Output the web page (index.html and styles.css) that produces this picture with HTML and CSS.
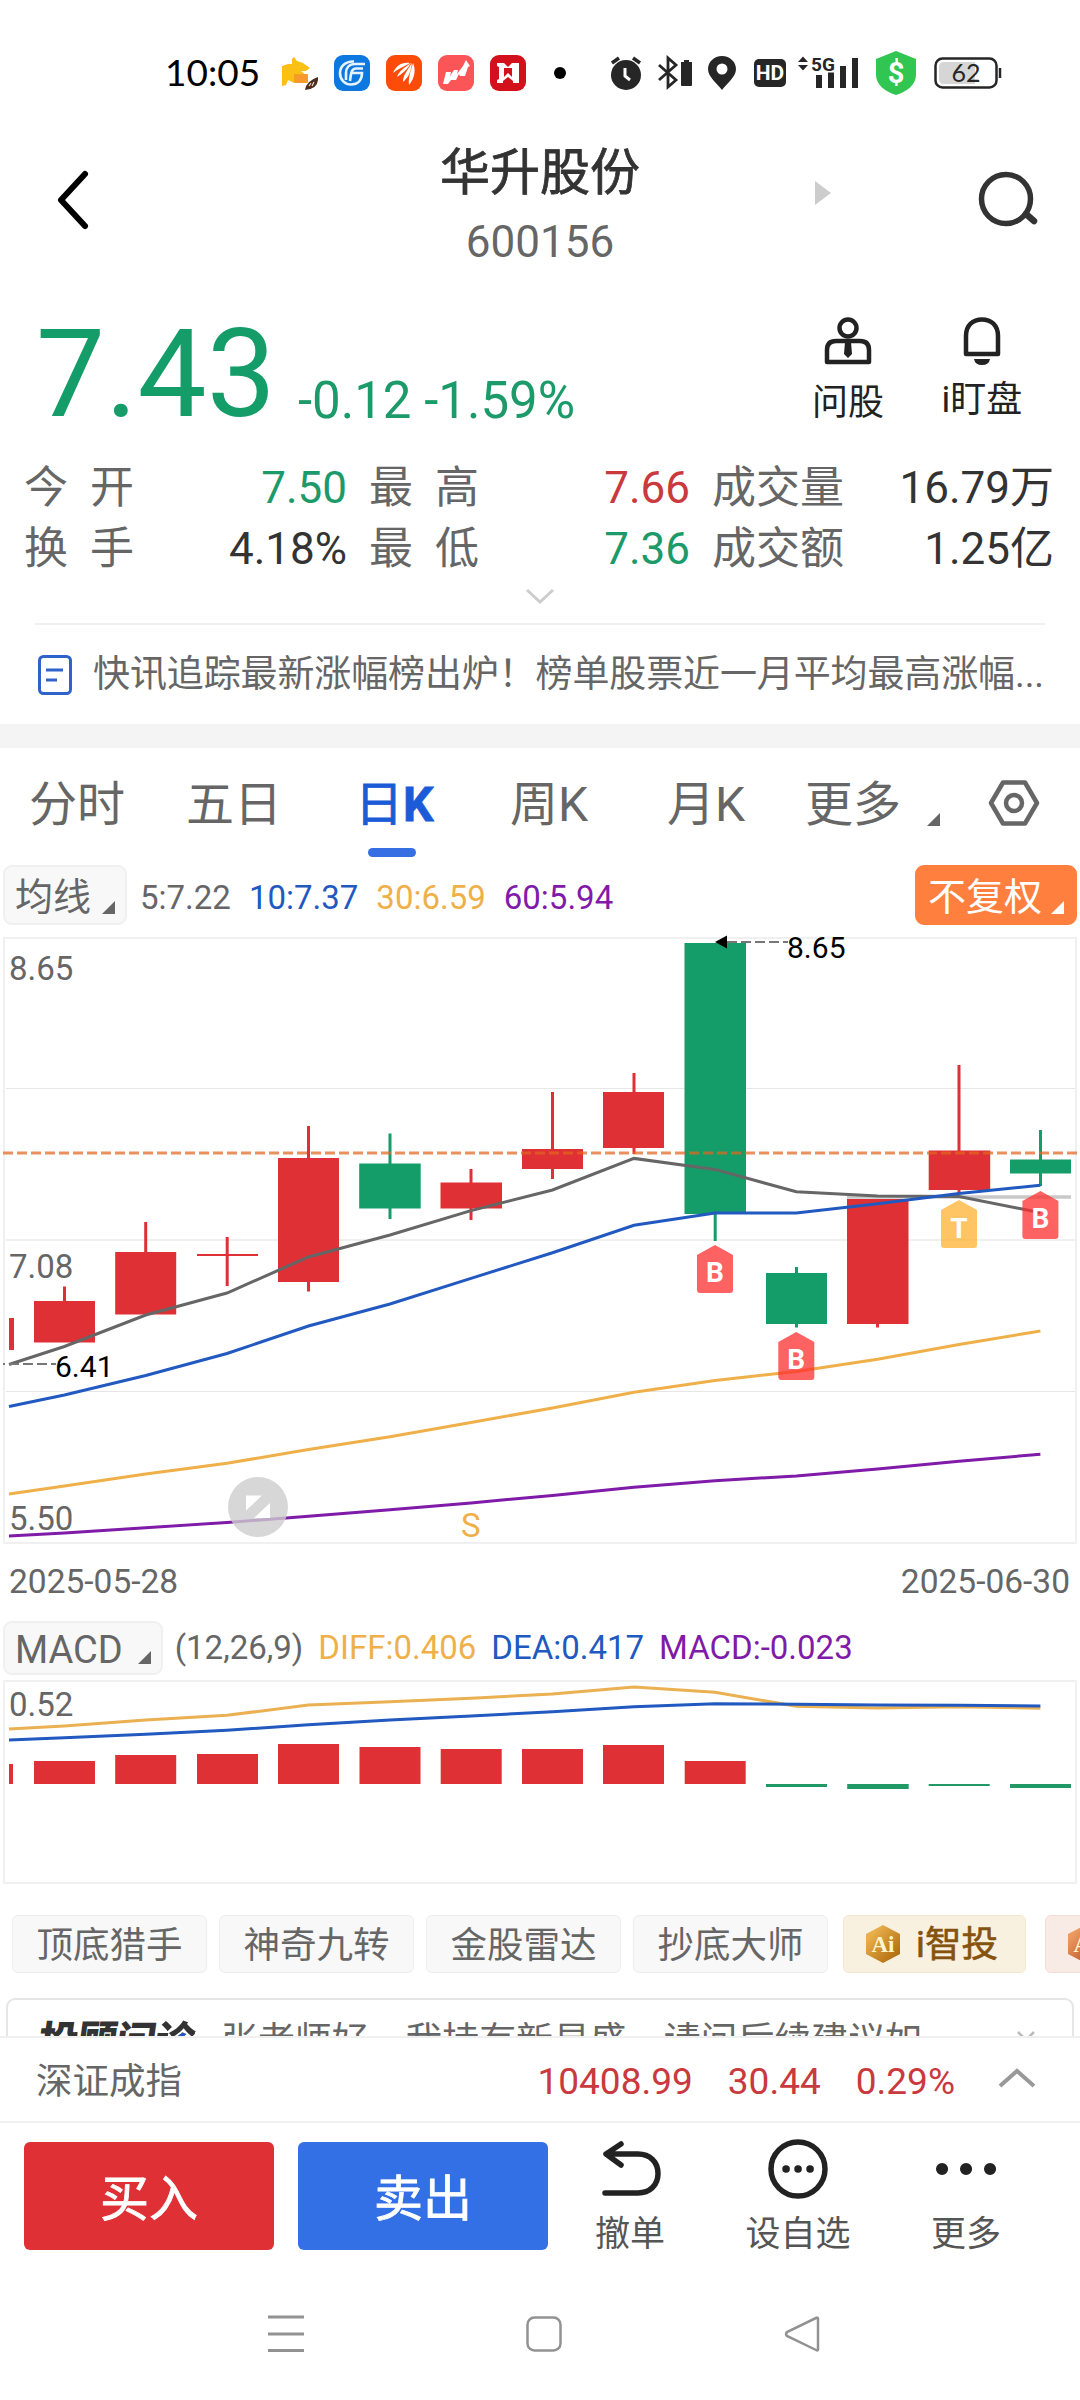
FILE: index.html
```html
<!DOCTYPE html>
<html lang="zh-CN">
<head>
    <meta charset="UTF-8">
    <meta name="viewport" content="width=device-width, initial-scale=1.0">
    <title>华升股份 600156</title>
    <link rel="stylesheet" href="styles.css">
</head>
<body>
    <div class="phone">
        <div class="status-bar">
            <span class="clock">10:05</span>
            <div class="app-icons">
                <svg width="36" height="36" viewBox="0 0 36 36">
                    <path d="M0 11 L6 9 L10 9 L10 4 L12 2 L15 6 L21 8 L28 13 L24 16 L19 16 L24 20 L12 22 L12 28 L6 25 L4 30 L0 31 Z" fill="#fbc016"/>
                    <rect x="12" y="19" width="14" height="9" rx="1" fill="#f79a2b"/>
                    <path d="M23 35 Q24 26 36 22 Q37 34 23 35Z" fill="#4a2c22"/>
                    <path d="M27 31 l2 -3 M30 31 l2 -4" stroke="#e8d8c8" stroke-width="1.2"/>
                </svg>
                <svg width="36" height="36" viewBox="0 0 36 36">
                    <rect width="36" height="36" rx="9" fill="#0c78e0"/>
                    <g fill="none" stroke="#e6f3ff" stroke-width="2.6">
                        <path d="M20 6.500 C11 6 6 12 6 18 C6 25 11 29.500 17 29.500 C24 29.500 28 25 28 18 H18"/>
                        <path d="M31 9 H21 C15 9 12 13 12 18 V25"/>
                        <path d="M29 13.500 H22 C18 13.500 17 17 16 26"/>
                    </g>
                </svg>
                <svg width="36" height="36" viewBox="0 0 36 36">
                    <rect width="36" height="36" rx="9" fill="#fc4c08"/>
                    <path d="M24 8 C15 7 10 11 7 18 C12 14 17 12 24 8Z M25 8 C18 13 13 16 11 22 C16 19 21 15 25 8Z M26 8 C21 16 17 20 17 27 C23 22 25 16 26 8Z M27 8 C25 16 22 22 23 30 C29 23 30 14 27 8Z" fill="#fff"/>
                </svg>
                <svg width="36" height="36" viewBox="0 0 36 36">
                    <rect width="36" height="36" rx="9" fill="#fb5558"/>
                    <path d="M5 29 L8 17 L13 17 L12 21 L16 15 L20 15 L19 19 L25 11 L28 5 L32 11 L30 12 L27 21 L22 21 L21 19 L18 25 L13 25 L10 29 Z" fill="#fff"/>
                </svg>
                <svg width="36" height="36" viewBox="0 0 36 36">
                    <rect width="36" height="36" rx="9" fill="#d3111d"/>
                    <path d="M7 8 H14 L18 12 L22 8 H29 V28 H23 V26 L18 22 L13 26 V28 H7 V25 L9 24 V12 L7 11 Z" fill="#fff"/>
                    <path d="M14 13 H22 V22 L18 18 L14 22 Z" fill="#d3111d"/>
                </svg>
            </div>
            <span class="more-dot"></span>
            <div class="sys-icons">
                <svg width="32" height="36" viewBox="0 0 32 36">
                    <circle cx="16" cy="20" r="15" fill="#262626"/>
                    <path d="M2 8 L9 3 M30 8 L23 3" stroke="#262626" stroke-width="3.500"/>
                    <path d="M15 13 V21 L20 25" fill="none" stroke="#fff" stroke-width="3"/>
                </svg>
                <svg width="36" height="36" viewBox="0 0 36 36">
                    <path d="M2 10 L19 25 L11 32 V3 L19 10 L2 25" fill="none" stroke="#262626" stroke-width="2.800"/>
                    <path d="M24 7 H27 V5 H32 V7 H35 V30 Q35 31 34 31 H25 Q24 31 24 30 Z" fill="#262626"/>
                </svg>
                <svg width="28" height="36" viewBox="0 0 28 36">
                    <path d="M14 1 C6 1 0 7 0 14 C0 22 9 28 14 35 C19 28 28 22 28 14 C28 7 22 1 14 1Z" fill="#262626"/>
                    <circle cx="14" cy="14" r="5.500" fill="#fff"/>
                </svg>
                <span class="hd">HD</span>
                <svg class="signal" width="62" height="36" viewBox="0 0 62 36">
                    <path d="M0 7 L5 1.500 L10 7 Z M0 10 L5 15.500 L10 10 Z" fill="#262626"/>
                    <text x="13" y="15.500" class="net">5G</text>
                    <path d="M18 20 h6 v13 h-6z M30 17.500 h6 v15.500 h-6z M42 11 h6 v22 h-6z M54 3 h6 v30 h-6z" fill="#262626"/>
                </svg>
                <svg width="42" height="46" viewBox="0 0 42 46">
                    <path d="M21 1 L41 9 V25 C41 35 31 42 21 45 C11 42 1 35 1 25 V9 Z" fill="#31c551"/>
                    <text x="21" y="33" class="dollar">$</text>
                </svg>
                <svg width="68" height="34" viewBox="0 0 68 34">
                    <rect x="1.500" y="2.500" width="61" height="29" rx="7" fill="#fff" stroke="#262626" stroke-width="2.500"/>
                    <path d="M10 6 H41 V28 H10 Q5 28 5 23 V11 Q5 6 10 6Z" fill="#d6d6d6"/>
                    <path d="M66 12 V22" stroke="#262626" stroke-width="2.500"/>
                    <text x="32" y="26" class="battery">62</text>
                </svg>
            </div>
        </div>

        <div class="header">
            <svg class="back" width="36" height="64" viewBox="0 0 36 64">
                <path d="M30 6 L6 32 L30 58" fill="none" stroke="#000" stroke-width="6" stroke-linecap="round" stroke-linejoin="round"/>
            </svg>
            <div class="stock">
                <div class="stock-name">华升股份</div>
                <div class="stock-code">600156</div>
            </div>
            <div class="header-right">
                <svg class="next" width="16" height="24" viewBox="0 0 16 24"><path d="M0 0 L16 12 L0 24Z" fill="#ccc"/></svg>
                <svg width="64" height="60" viewBox="0 0 64 60">
                    <circle cx="29" cy="29" r="24.500" fill="none" stroke="#333" stroke-width="5.500"/>
                    <path d="M49 44 L57 51" stroke="#333" stroke-width="6.500" stroke-linecap="round"/>
                </svg>
            </div>
        </div>

        <div class="quote">
            <div class="price">7.43</div>
            <div class="change">-0.12 -1.59%</div>
            <div class="quick">
                <svg width="48" height="50" viewBox="0 0 48 50">
                    <g fill="none" stroke="#222" stroke-width="4.500">
                        <circle cx="24" cy="12" r="8.500"/>
                        <path d="M12 25 H36 Q45 25 45 34 V46 H3 V34 Q3 25 12 25Z" stroke-linejoin="round"/>
                    </g>
                    <path d="M21 26 H27 L28 38 L24 42 L20 38Z" fill="#222"/>
                </svg>
                <span>问股</span>
            </div>
            <div class="quick watch">
                <svg width="48" height="50" viewBox="0 0 48 50">
                    <path d="M8 38 V20 C8 9 15 3.500 24 3.500 C33 3.500 40 9 40 20 V38 Z" fill="none" stroke="#222" stroke-width="4.500" stroke-linejoin="round"/>
                    <path d="M16 43 H32 Q31 49 24 49 Q17 49 16 43Z" fill="#222"/>
                </svg>
                <span>i盯盘</span>
            </div>
        </div>

        <div class="stats">
            <span class="stat-label wide"><i>今</i><i>开</i></span><span class="stat-value down">7.50</span>
            <span class="stat-label wide"><i>最</i><i>高</i></span><span class="stat-value up">7.66</span>
            <span class="stat-label">成交量</span><span class="stat-value">16.79万</span>
            <span class="stat-label wide"><i>换</i><i>手</i></span><span class="stat-value">4.18%</span>
            <span class="stat-label wide"><i>最</i><i>低</i></span><span class="stat-value down">7.36</span>
            <span class="stat-label">成交额</span><span class="stat-value">1.25亿</span>
        </div>
        <div class="expand">
            <svg width="30" height="18" viewBox="0 0 30 18"><path d="M2 2 L15 14 L28 2" fill="none" stroke="#ccc" stroke-width="3"/></svg>
        </div>

        <div class="news">
            <svg width="34" height="40" viewBox="0 0 34 40">
                <rect x="1.500" y="1.500" width="31" height="37" rx="4" fill="none" stroke="#2f63c9" stroke-width="3"/>
                <path d="M8 15 H25 M8 25 H19" stroke="#2f63c9" stroke-width="3"/>
            </svg>
            <span>快讯追踪最新涨幅榜出炉！榜单股票近一月平均最高涨幅...</span>
        </div>

        <div class="tabs">
            <span class="tab">分时</span>
            <span class="tab">五日</span>
            <span class="tab active">日<b>K</b></span>
            <span class="tab">周K</span>
            <span class="tab">月K</span>
            <span class="tab more">更多</span>
            <svg class="tri" width="13" height="13" viewBox="0 0 13 13"><path d="M13 0 V13 H0Z" fill="#666"/></svg>
            <svg class="settings" width="52" height="50" viewBox="0 0 52 50">
                <path d="M15 4.500 H37 L49 25 L37 45.500 H15 L3 25 Z" fill="none" stroke="#666" stroke-width="4.500" stroke-linejoin="round"/>
                <circle cx="26" cy="25" r="8" fill="none" stroke="#666" stroke-width="4.500"/>
            </svg>
        </div>

        <div class="indicator-row">
            <div class="select">均线<svg width="13" height="13" viewBox="0 0 13 13"><path d="M13 0 V13 H0Z" fill="#666"/></svg></div>
            <span class="ma5">5:7.22</span>
            <span class="blue">10:7.37</span>
            <span class="yellow">30:6.59</span>
            <span class="purple">60:5.94</span>
            <div class="select adjust">不复权<svg width="13" height="13" viewBox="0 0 13 13"><path d="M13 0 V13 H0Z" fill="#fff"/></svg></div>
        </div>

        <svg class="chart" width="1080" height="614" viewBox="0 932 1080 614">
            <rect x="4" y="938" width="1072" height="605" fill="none" stroke="#f0f0f0" stroke-width="2"/>
            <path d="M6 1088.500 H1075 M6 1391.500 H1075" stroke="#e6e6e6"/>
            <path d="M6 1240 H1075" stroke="#f0f0f0" stroke-width="2"/>

            <!-- candles -->
            <g fill="#df3135">
                <path d="M9 1318h5v32h-5z"/>
                <path d="M34 1301h61v41.500h-61z M63 1286.500h3v15h-3z"/>
                <path d="M115.200 1252h61v62.500h-61z M144.200 1222h3v31h-3z"/>
                <path d="M197 1254h61v2h-61z M225.700 1237h3v49h-3z"/>
                <path d="M278 1158h61v124h-61z M307 1126h3v165.500h-3z"/>
                <path d="M440.500 1182.500h61.500v26h-61.500z M469.500 1169h3v51h-3z"/>
                <path d="M522 1149h61v20h-61z M551 1092h3v87h-3z"/>
                <path d="M603 1092h61v56h-61z M632.500 1073h3v81h-3z"/>
                <path d="M847 1199h61.500v125h-61.500z M876 1320h3v7.500h-3z"/>
                <path d="M928.700 1150.500h61.500v39.500h-61.500z M957.500 1065h3v128h-3z"/>
            </g>
            <g fill="#149d69">
                <path d="M359.200 1163.500h61.500v45h-61.500z M388.500 1133.500h3v85.500h-3z"/>
                <path d="M684.500 943h61.500v271h-61.500z M713.700 1210h3v31h-3z"/>
                <path d="M766 1273h61v51h-61z M795 1267h3v60.500h-3z"/>
                <path d="M1010 1159.500h61v14h-61z M1039 1130h3v56h-3z"/>
            </g>
            <path d="M847 1197 H1071" stroke="#c8c8c8" stroke-width="3.500"/>
            <path d="M3 1153 H1077" stroke="#e2651f" stroke-opacity="0.720" stroke-width="3.200" stroke-dasharray="10 4"/>

            <!-- moving averages -->
            <g fill="none" stroke-width="3">
                <polyline stroke="#666" points="9,1364.500 64.400,1346.500 145.700,1315 227,1293 308.500,1257 390,1235 471,1210.600 552.500,1190 634,1158.400 715,1169.400 796.300,1191.800 877.600,1196 959,1196.500 1040.400,1212.700"/>
                <polyline stroke="#2159c0" points="9,1406.500 64.400,1395 145.700,1375.500 227,1353.500 308.500,1326 390,1304 471,1278.400 552.500,1252.700 634,1225.300 715,1213 796.300,1213 877.600,1203.700 959,1193.500 1040.400,1185.300"/>
                <polyline stroke="#efb04a" points="9,1493.900 64.400,1486 145.700,1474 227,1463.300 308.500,1449.400 390,1436.700 471,1422.400 552.500,1408 634,1392.200 715,1380.400 796.300,1371.400 877.600,1359.200 959,1344.500 1040.400,1331"/>
                <polyline stroke="#7f1ba8" points="9,1536 64.400,1533 145.700,1527.800 227,1522.400 308.500,1516.300 390,1509.800 471,1502.900 552.500,1495.500 634,1487.300 715,1480.800 796.300,1475.900 877.600,1469 959,1461.200 1040.400,1454.300"/>
            </g>

            <g class="axis">
                <text x="9" y="980">8.65</text>
                <text x="9" y="1278">7.08</text>
                <text x="9" y="1529.500">5.50</text>
            </g>
            <path d="M3 1364 H56" stroke="#777" stroke-width="1.800" stroke-dasharray="10 4" stroke-dashoffset="8"/>
            <path d="M727 942 H788" stroke="#777" stroke-width="1.800" stroke-dasharray="10 4"/>
            <path d="M715 942 L727 935.500 V948.500 Z"/>
            <g class="extreme">
                <text x="55" y="1377">6.41</text>
                <text x="787" y="957.500">8.65</text>
            </g>
            <text x="461" y="1536.500" class="sell-mark">S</text>

            <!-- trade marks -->
            <g class="marks">
                <path class="mark-b" d="M715 1245 L733 1255 V1290 Q733 1293 730 1293 H700 Q697 1293 697 1290 V1255Z"/>
                <path class="mark-b" d="M796.300 1332 L814.300 1342 V1377 Q814.300 1380 811.300 1380 H781.300 Q778.300 1380 778.300 1377 V1342Z"/>
                <path class="mark-t" d="M959 1200 L977 1210 V1245 Q977 1248 974 1248 H944 Q941 1248 941 1245 V1210Z"/>
                <path class="mark-b" d="M1040.400 1191 L1058.400 1201 V1236 Q1058.400 1239 1055.400 1239 H1025.400 Q1022.400 1239 1022.400 1236 V1201Z"/>
                <text x="715" y="1282">B</text>
                <text x="796.300" y="1369">B</text>
                <text x="959" y="1237.500">T</text>
                <text x="1040.400" y="1228">B</text>
            </g>

            <circle cx="258" cy="1507" r="30" fill="#cdcdcd" fill-opacity="0.800"/>
            <path d="M246 1495.500 h16 l-16 15z M270 1518 h-16 l16 -15z" fill="#fff"/>
        </svg>

        <div class="dates">
            <span>2025-05-28</span>
            <span>2025-06-30</span>
        </div>

        <div class="indicator-row macd-row">
            <div class="select macd">MACD<svg width="13" height="13" viewBox="0 0 13 13"><path d="M13 0 V13 H0Z" fill="#666"/></svg></div>
            <span>(12,26,9)</span>
            <span class="yellow">DIFF:0.406</span>
            <span class="blue">DEA:0.417</span>
            <span class="purple">MACD:-0.023</span>
        </div>

        <svg class="chart" width="1080" height="206" viewBox="0 1679 1080 206">
            <rect x="4" y="1681" width="1072" height="202" fill="none" stroke="#f0f0f0" stroke-width="2"/>
            <path fill="#df3135" d="M9 1764h4v20h-4z M34 1761h61v23h-61z M115.200 1755h61v29h-61z M197 1754h61v30h-61z M278 1744h61v40h-61z M359.500 1747h61v37h-61z M440.700 1749h61v35h-61z M522 1749h61v35h-61z M603 1745h61v39h-61z M684.700 1761h61v23h-61z"/>
            <path fill="#219966" d="M766 1784h61v3h-61z M847.200 1784h61.500v5h-61.500z M928.700 1784h61v2h-61z M1010 1784h61v4h-61z"/>
            <g fill="none" stroke-width="3">
                <polyline stroke="#eab052" points="9,1729 64.400,1726 145.700,1720 227,1715.300 308.500,1705 390,1701.700 471,1698.300 552.500,1694 634,1687 715,1692.300 796.300,1706.300 877.600,1708 959,1706.700 1040.400,1708.300"/>
                <polyline stroke="#2159c0" points="9,1740 64.400,1737.700 145.700,1734.300 227,1730.300 308.500,1724.700 390,1720 471,1716 552.500,1711.700 634,1706.700 715,1703.700 796.300,1704.300 877.600,1705 959,1705.300 1040.400,1706"/>
            </g>
            <g class="axis"><text x="9" y="1715.500">0.52</text></g>
        </svg>

        <div class="tools">
            <span class="tool">顶底猎手</span>
            <span class="tool">神奇九转</span>
            <span class="tool">金股雷达</span>
            <span class="tool">抄底大师</span>
            <span class="tool ai">
                <svg width="38" height="40" viewBox="0 0 38 40">
                    <defs>
                        <linearGradient id="gold" x1="0" y1="0" x2="1" y2="1"><stop offset="0.200" stop-color="#e8b04c"/><stop offset="0.900" stop-color="#b06a0c"/></linearGradient>
                        <linearGradient id="copper" x1="0" y1="0" x2="1" y2="1"><stop offset="0.200" stop-color="#eb9a60"/><stop offset="0.900" stop-color="#b4481c"/></linearGradient>
                    </defs>
                    <path d="M19 1 L36 10 V30 L19 39 L2 30 V10Z" fill="url(#gold)"/>
                    <text x="19" y="28" class="ai-text">Ai</text>
                </svg>i智投</span>
            <span class="tool ai ai-red">
                <svg width="38" height="40" viewBox="0 0 38 40">
                    <path d="M19 1 L36 10 V30 L19 39 L2 30 V10Z" fill="url(#copper)"/>
                    <text x="19" y="28" class="ai-text">Ai</text>
                </svg></span>
        </div>

        <div class="advisor-clip">
            <div class="advisor">
                <span class="advisor-logo">投顾问<em>诊</em></span>
                <span class="advisor-text">张老师好，我持有新易盛，请问后续建议如</span>
                <svg width="18" height="18" viewBox="0 0 18 18"><path d="M1 1 L17 17 M17 1 L1 17" stroke="#bbb" stroke-width="2.500"/></svg>
            </div>
        </div>

        <div class="index-bar">
            <span class="index-name">深证成指</span>
            <span class="up">10408.99</span>
            <span class="up">30.44</span>
            <span class="up">0.29%</span>
            <svg width="38" height="22" viewBox="0 0 38 22"><path d="M2 19 L19 4 L36 19" fill="none" stroke="#999" stroke-width="4"/></svg>
        </div>

        <div class="trade-bar">
            <div class="trade-btn buy">买入</div>
            <div class="trade-btn sell">卖出</div>
            <div class="action">
                <svg width="64" height="64" viewBox="0 0 64 64">
                    <path d="M23 7 L8 17 L23 28 M8 17 H40 C52 17 60 25 60 36.500 C60 48 52 56 40 56 H7" fill="none" stroke="#222" stroke-width="5.500" stroke-linecap="round" stroke-linejoin="round"/>
                </svg>
                <span>撤单</span>
            </div>
            <div class="action wide">
                <svg width="64" height="64" viewBox="0 0 64 64">
                    <circle cx="32" cy="32" r="27" fill="none" stroke="#222" stroke-width="5.500"/>
                    <path d="M20 32 h.1 M32 32 h.1 M44 32 h.1" stroke="#222" stroke-width="7.500" stroke-linecap="round"/>
                </svg>
                <span>设自选</span>
            </div>
            <div class="action">
                <svg width="64" height="64" viewBox="0 0 64 64">
                    <path d="M8 32 h.1 M32 32 h.1 M56 32 h.1" stroke="#222" stroke-width="12" stroke-linecap="round"/>
                </svg>
                <span>更多</span>
            </div>
        </div>

        <div class="nav-bar">
            <svg width="40" height="40" viewBox="0 0 40 40"><path d="M2 3 H38 M2 20 H38 M2 36.500 H38" stroke="#929292" stroke-width="3"/></svg>
            <svg width="40" height="40" viewBox="0 0 40 40"><rect x="3.500" y="3.500" width="33" height="33" rx="7" fill="none" stroke="#929292" stroke-width="2.500"/></svg>
            <svg width="40" height="40" viewBox="0 0 40 40"><path d="M36 4.500 V35.500 Q36 37 34 36 L5 22 Q3 20 5 18 L34 4 Q36 3 36 4.500Z" fill="none" stroke="#929292" stroke-width="2.500"/></svg>
        </div>
    </div>
</body>
</html>
```
FILE: styles.css
```css
* {
    margin: 0;
    padding: 0;
    box-sizing: border-box;
}

body {
    font-family: Roboto, "Noto Sans CJK SC", sans-serif;
    background: #fff;
    color: #333;
}

svg {
    display: block;
    flex-shrink: 0;
}

.phone {
    width: 1080px;
    height: 2400px;
    overflow: hidden;
    display: flex;
    flex-direction: column;
    white-space: nowrap;
}

.phone > * {
    flex-shrink: 0;
}

.up {
    color: #c9393d;
}

.down {
    color: #1c9a69;
}

.blue {
    color: #2159c0;
}

.yellow {
    color: #efb04a;
}

.purple {
    color: #7f1ba8;
}

/* status bar */
.status-bar {
    height: 120px;
    padding: 26px 0 0 165px;
    display: flex;
    align-items: center;
}

.clock {
    width: 117px;
    margin-top: -4px;
    font-family: Lato, sans-serif;
    font-size: 37px;
    color: #000;
}

.app-icons {
    display: flex;
    gap: 16px;
}

.more-dot {
    width: 12px;
    height: 12px;
    margin: 0 44px 0 28px;
    border-radius: 50%;
    background: #000;
}

.sys-icons {
    display: flex;
    align-items: center;
}

.sys-icons svg:nth-child(2) {
    margin: 0 15px;
}

.hd {
    width: 32px;
    height: 28px;
    margin: 0 12px 0 18px;
    border-radius: 5px;
    background: #262626;
    color: #fff;
    font-size: 21px;
    font-weight: bold;
    line-height: 28px;
    text-align: center;
}

.signal {
    margin-right: 15px;
}

.net {
    font-size: 19px;
    font-weight: bold;
    fill: #262626;
}

.dollar {
    font-size: 29px;
    font-weight: bold;
    fill: #fff;
    text-anchor: middle;
}

.sys-icons svg:last-child {
    margin-left: 17px;
}

.battery {
    font-family: Lato, sans-serif;
    font-size: 25px;
    fill: #262626;
    text-anchor: middle;
}

/* header */
.header {
    height: 160px;
    padding: 0 39px;
    display: grid;
    grid-template-columns: 1fr auto 1fr;
    align-items: center;
}

.back {
    margin-left: 16px;
}

.stock {
    text-align: center;
}

.stock-name {
    height: 60px;
    margin-top: 11px;
    font-size: 50px;
    line-height: 60px;
    -webkit-text-stroke: 0.8px #333;
}

.stock-code {
    height: 52px;
    margin-top: 13px;
    font-size: 44px;
    line-height: 52px;
    color: #666;
}

.header-right {
    display: flex;
    justify-content: flex-end;
    align-items: center;
    gap: 146px;
}

.next {
    margin-top: -14px;
}

/* price */
.quote {
    height: 177px;
    padding: 36px 56px 0 36px;
    display: flex;
    color: #222;
}

.price {
    width: 262px;
    margin-top: -14px;
    font-size: 123px;
    line-height: 144px;
    color: #149d69;
}

.change {
    flex: 1;
    margin-top: 55px;
    font-size: 51px;
    line-height: 60px;
    color: #1c9a69;
}

.quick {
    width: 76px;
    height: 110px;
    display: flex;
    flex-direction: column;
    align-items: center;
    font-size: 36px;
    line-height: 40px;
}

.quick span {
    margin-top: 17px;
}

.watch {
    width: 84px;
    margin-left: 54px;
}

.watch span {
    margin-top: 14px;
}

.stats {
    height: 123px;
    padding: 1px 26px 0 24px;
    display: grid;
    grid-template-columns: 110px 213px 132px 211px 157px 1fr;
    grid-template-rows: 61px 61px;
    font-size: 44px;
    line-height: 60px;
}

.stat-label {
    color: #666;
}

.stat-label:nth-child(3),
.stat-label:nth-child(5),
.stat-label:nth-child(9),
.stat-label:nth-child(11) {
    padding-left: 22px;
}

.stat-label.wide {
    display: flex;
    justify-content: space-between;
}

.stat-label i {
    font-style: normal;
}

.stat-value {
    text-align: right;
}

.expand {
    height: 45px;
    margin: 0 35px;
    padding-top: 8px;
    border-bottom: 2px solid #f0f0f0;
    display: flex;
    justify-content: center;
}

.news {
    height: 123px;
    padding: 0 0 0 38px;
    border-bottom: 24px solid #f4f4f4;
    display: flex;
    align-items: center;
    gap: 21px;
    font-size: 37px;
    line-height: 50px;
    letter-spacing: -0.12px;
    color: #666;
}

/* period tabs */
.tabs {
    height: 117px;
    padding: 22px 0 0 29px;
    display: flex;
    font-size: 48px;
    line-height: 70px;
    color: #666;
}

.tab {
    position: relative;
    width: 157px;
}

.tab:nth-child(2) {
    width: 169px;
}

.tab.active {
    width: 155px;
    color: #1c5bd8;
    -webkit-text-stroke: 0.8px #1c5bd8;
}

.tab.active::after {
    content: "";
    position: absolute;
    left: 13px;
    bottom: 8px;
    width: 48px;
    height: 9px;
    border-radius: 5px;
    background: #356fe3;
}

.tab:nth-child(5) {
    width: 138px;
}

.tab.more {
    width: 122px;
}

.tabs .tri {
    margin-top: 43px;
}

.settings {
    margin: 8px 0 0 48px;
}

/* indicator rows */
.indicator-row {
    height: 67px;
    padding: 0 3px;
    display: flex;
    align-items: flex-start;
    font-size: 33px;
    line-height: 66px;
    color: #666;
}

.indicator-row > span {
    margin-right: 18px;
}

.select {
    height: 60px;
    margin-right: 13px;
    padding: 0 10px 0 10px;
    border: 2px solid #f0f0f0;
    border-radius: 9px;
    background: #f8f8f8;
    display: flex;
    gap: 11px;
    font-size: 38px;
    line-height: 61px;
}

.select svg {
    margin-top: 34px;
}

.adjust {
    margin: 0 0 0 auto;
    padding: 0 11px 0 11px;
    gap: 9px;
    border-color: #ff7f3f;
    background: #ff7f3f;
    color: #fff;
}

.chart {
    display: block;
}

.axis {
    font-size: 33px;
    fill: #666;
}

.extreme {
    font-size: 30px;
    fill: #000;
}

.sell-mark {
    font-size: 33px;
    fill: #efb04a;
}

.marks text {
    font-size: 28px;
    font-weight: bold;
    fill: #fff;
    text-anchor: middle;
}

.mark-b {
    fill: #ff2b2b;
    fill-opacity: 0.74;
}

.mark-t {
    fill: #ffb232;
    fill-opacity: 0.75;
}

.dates {
    height: 75px;
    padding: 14px 10px 0 9px;
    display: flex;
    justify-content: space-between;
    font-size: 33.500px;
    line-height: 44px;
    color: #666;
}

.macd-row {
    height: 58px;
    line-height: 53px;
}

.macd-row > span {
    margin-right: 15px;
}

.macd {
    height: 54px;
    margin-right: 12px;
    padding-right: 10px;
    gap: 15px;
    line-height: 54px;
}

.macd svg {
    margin-top: 28px;
}

/* tool pills */
.tools {
    height: 113px;
    padding: 30px 0 0 12px;
    display: flex;
    gap: 12px;
    overflow: hidden;
    font-size: 36.500px;
    line-height: 59px;
    color: #666;
}

.tool {
    flex-shrink: 0;
    width: 195px;
    height: 58px;
    border: 1px solid #eee;
    border-radius: 6px;
    background: #f8f8f8;
    text-align: center;
}

.tool.ai {
    width: 183px;
    margin-left: 3px;
    padding-left: 20px;
    border-color: #f2e6cf;
    background: #f8f1e0;
    display: flex;
    align-items: center;
    gap: 14px;
    color: #85530f;
    -webkit-text-stroke: 0.6px #85530f;
}

.tool.ai-red {
    margin-left: 7px;
    border-color: #f3ddd4;
    background: #f8ebe5;
}

.ai-text {
    font-family: "Liberation Serif", serif;
    font-size: 23px;
    font-weight: bold;
    fill: #fff5cc;
    text-anchor: middle;
    -webkit-text-stroke: 0;
}

.advisor-clip {
    height: 38px;
    padding: 0 6px;
    overflow: hidden;
}

.advisor {
    height: 90px;
    padding: 14px 37px 0 29px;
    border: 2px solid #e6e6e6;
    border-radius: 9px;
    display: flex;
}

.advisor-logo {
    width: 184px;
    font-size: 40px;
    font-weight: 900;
    line-height: 56px;
    letter-spacing: -1px;
    transform: skewX(-8deg);
}

.advisor-logo em {
    font-style: normal;
    background: radial-gradient(circle at 65% 45%, #2159c0 6px, #333 7px);
    -webkit-background-clip: text;
    color: transparent;
}

.advisor-text {
    flex: 1;
    font-size: 36.900px;
    line-height: 54px;
    color: #666;
}

.advisor svg {
    margin-top: 17px;
}

/* index bar */
.index-bar {
    height: 87px;
    padding: 4px 44px 0 36px;
    border-top: 2px solid #f0f0f0;
    border-bottom: 2px solid #f0f0f0;
    display: flex;
    align-items: center;
    font-size: 37px;
    line-height: 50px;
}

.index-name {
    flex: 1;
    font-size: 36.500px;
    color: #666;
}

.index-bar .up {
    margin-left: 35px;
}

.index-bar svg {
    margin: 0 0 7px 43px;
}

/* trade bar */
.trade-bar {
    height: 165px;
    padding: 19px 0 0 24px;
    display: flex;
}

.trade-btn {
    width: 250px;
    height: 108px;
    margin-right: 24px;
    border-radius: 6px;
    color: #fff;
    font-size: 49px;
    line-height: 115px;
    text-align: center;
    -webkit-text-stroke: 0.8px #fff;
}

.buy {
    background: #df3135;
}

.sell {
    background: #336fe5;
}

.action {
    width: 116px;
    margin-top: -5px;
    display: flex;
    flex-direction: column;
    align-items: center;
    font-size: 35px;
    line-height: 40px;
    color: #555;
}

.action.wide {
    width: 220px;
}

.action span {
    margin-top: 14px;
}

/* system nav */
.nav-bar {
    height: 112px;
    padding: 26px 0 0 266px;
    display: flex;
    gap: 218px;
}
```
